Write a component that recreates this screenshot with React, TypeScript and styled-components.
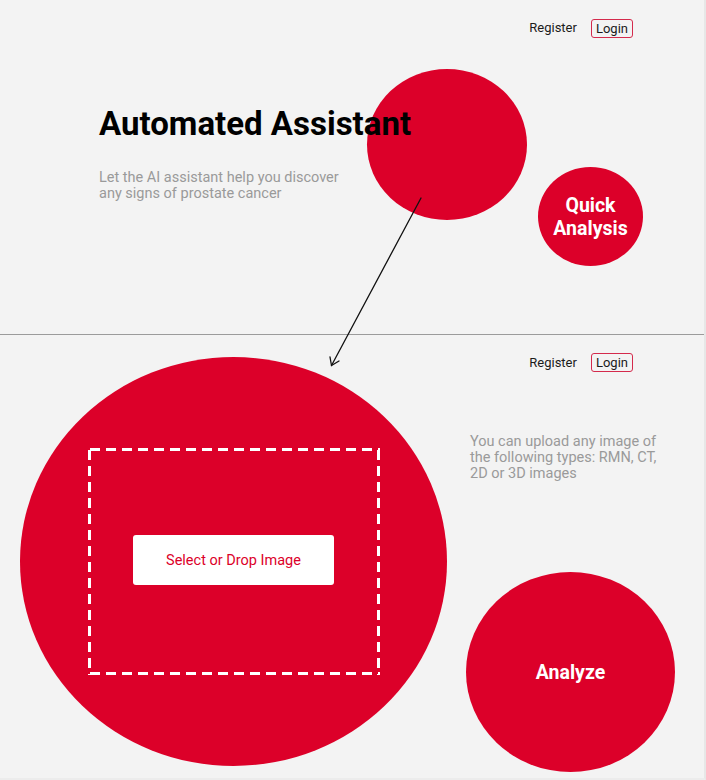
import React from "react"
import styled, { createGlobalStyle } from "styled-components"

const RED = "#dc0029"

const GlobalStyle = createGlobalStyle`
  html, body {
    margin: 0;
    padding: 0;
    background: #ececec;
  }
  body {
    font-family: Roboto, "Liberation Sans", sans-serif;
  }
  * {
    box-sizing: border-box;
  }
`

const Page = styled.div`
  position: relative;
  width: 706px;
  height: 780px;
  background: #f3f3f3;
  border-right: 2px solid #e7e7e7;
  border-bottom: 2px solid #ececec;
  overflow: hidden;
`

const Nav = styled.nav`
  display: flex;
  justify-content: flex-end;
  align-items: center;
  gap: 14px;
  padding: 18px 71px 0 0;
  font-size: 13px;
  color: #1b1b1b;
`

const NavLink = styled.a`
  line-height: 18px;
  cursor: pointer;
`

const LoginButton = styled.a`
  line-height: 17px;
  padding: 0 4px;
  border: 1.5px solid #d42a4c;
  border-radius: 3px;
  cursor: pointer;
`

const Hero = styled.section`
  display: grid;
  grid-template-columns: 99px 268px 160px 11px 105px 1fr;
  grid-template-rows: 38px 31px 151px 46px 1fr;
  height: 335px;
  border-bottom: 1px solid #9b9b9b;
  ${Nav} {
    grid-row: 1;
    grid-column: 1 / -1;
  }
`

const Disc = styled.div<{ $w: number; $h: number }>`
  width: ${(p) => p.$w}px;
  height: ${(p) => p.$h}px;
  border-radius: 50%;
  background: ${RED};
  display: flex;
  align-items: center;
  justify-content: center;
  text-align: center;
  color: #fff;
  font-weight: 700;
  font-size: 19.5px;
  line-height: 23px;
`

const HeroDisc = styled(Disc)`
  grid-column: 3;
  grid-row: 3;
`

const QuickDisc = styled(Disc)`
  grid-column: 5;
  grid-row: 3 / 5;
  margin-top: 98px;
  cursor: pointer;
`

const Headings = styled.div`
  grid-column: 2 / 5;
  grid-row: 3 / 5;
  margin-top: 36px;
  position: relative;
  z-index: 1;
`

const Title = styled.h1`
  margin: 0;
  font-size: 33px;
  font-weight: 700;
  line-height: 38px;
  color: #000;
`

const Lead = styled.p`
  margin: 27px 0 0;
  font-size: 14.5px;
  line-height: 16px;
  color: #9a9a9a;
`

const Upload = styled.section`
  display: flex;
  height: 443px;
`

const DropArea = styled(Disc)`
  flex: none;
  margin: 22px 0 0 20px;
`

/* dashed outline drawn with gradients: 10px dash, 6px gap */
const DropZone = styled.div`
  width: 292px;
  height: 227px;
  display: flex;
  align-items: center;
  justify-content: center;
  background:
    linear-gradient(90deg, #fff 10px, transparent 10px) 2px 0 / 16px 3px repeat-x,
    linear-gradient(90deg, #fff 10px, transparent 10px) 2px 100% / 16px 3px repeat-x,
    linear-gradient(180deg, #fff 10px, transparent 10px) 0 2px / 3px 16px repeat-y,
    linear-gradient(180deg, #fff 10px, transparent 10px) 100% 2px / 3px 16px repeat-y;
`

const SelectButton = styled.button`
  width: 201px;
  height: 50px;
  margin-top: -3px;
  border: none;
  border-radius: 3px;
  background: #fff;
  color: ${RED};
  font-family: inherit;
  font-size: 14.5px;
  cursor: pointer;
`

const Side = styled.div`
  flex: 1;
  display: flex;
  flex-direction: column;
  margin-left: 19px;
  ${Nav} {
    padding-right: 71px;
  }
`

const Hint = styled.p`
  margin: 62px 0 0 4px;
  font-size: 14.5px;
  line-height: 16px;
  color: #9a9a9a;
`

const AnalyzeDisc = styled(Disc)`
  margin-top: 90px;
  cursor: pointer;
`

const Connector = styled.svg`
  position: absolute;
  left: 0;
  top: 0;
  pointer-events: none;
  z-index: 2;
`

export default function App() {
  return (
    <Page>
      <GlobalStyle />
      <Hero>
        <Nav>
          <NavLink>Register</NavLink>
          <LoginButton>Login</LoginButton>
        </Nav>
        <HeroDisc $w={160} $h={151} />
        <Headings>
          <Title>Automated Assistant</Title>
          <Lead>
            Let the AI assistant help you discover
            <br />
            any signs of prostate cancer
          </Lead>
        </Headings>
        <QuickDisc $w={105} $h={99}>
          Quick
          <br />
          Analysis
        </QuickDisc>
      </Hero>
      <Upload>
        <DropArea $w={427} $h={409}>
          <DropZone>
            <SelectButton>Select or Drop Image</SelectButton>
          </DropZone>
        </DropArea>
        <Side>
          <Nav>
            <NavLink>Register</NavLink>
            <LoginButton>Login</LoginButton>
          </Nav>
          <Hint>
            You can upload any image of
            <br />
            the following types: RMN, CT,
            <br />
            2D or 3D images
          </Hint>
          <AnalyzeDisc $w={209} $h={200}>Analyze</AnalyzeDisc>
        </Side>
      </Upload>
      <Connector width="706" height="780">
        <g stroke="#111" strokeWidth="1.3" fill="none" strokeLinecap="round">
          <line x1="421" y1="198" x2="331.5" y2="365.5" />
          <polyline points="330,357 331.5,365.5 339,361" />
        </g>
      </Connector>
    </Page>
  )
}
